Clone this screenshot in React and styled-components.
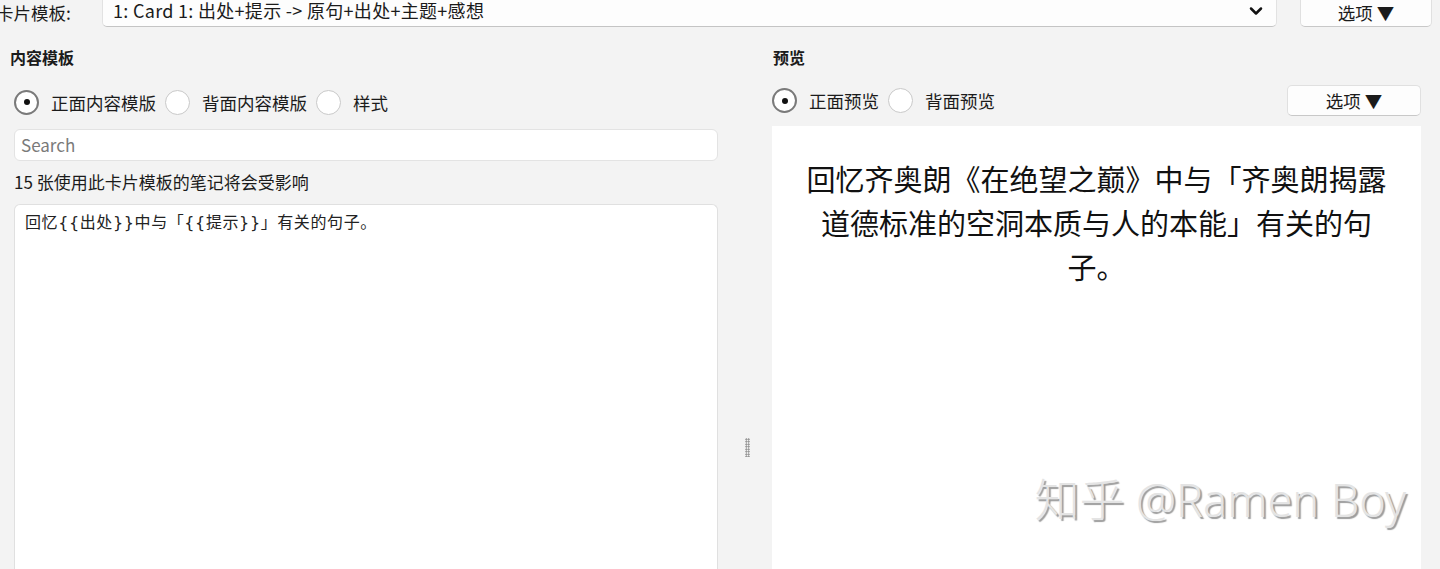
import styled, { createGlobalStyle } from 'styled-components';
import { ChevronDown } from 'lucide-react';

const GlobalStyle = createGlobalStyle`
  html, body {
    margin: 0;
    padding: 0;
    background: #f3f3f3;
  }
  body {
    font-family: "Noto Sans CJK SC", "Noto Sans", "Liberation Sans", sans-serif;
    color: #1b1b1b;
  }
`;

const Page = styled.div`
  width: 1440px;
  height: 569px;
  overflow: hidden;
  background: #f3f3f3;
`;

const TopRow = styled.div`
  display: flex;
  align-items: center;
  height: 34px;
  margin-top: -7px;
  padding-right: 8px;
`;

const TopLabel = styled.div`
  width: 106px;
  margin-left: -4px;
  margin-top: 6px;
  font-size: 17.5px;
  line-height: 22px;
  flex-shrink: 0;
`;

const Select = styled.div`
  flex: 1;
  height: 34px;
  box-sizing: border-box;
  display: flex;
  align-items: flex-end;
  justify-content: space-between;
  padding: 0 10px 5px 10px;
  background: #fdfdfd;
  border: 1px solid #e2e2e2;
  border-bottom-color: #c4c4c4;
  border-radius: 5px;
`;

const SelectText = styled.span`
  font-size: 18px;
  line-height: 22px;
  letter-spacing: 0.3px;
`;

const Button = styled.button`
  width: ${({ w }) => w || 132}px;
  height: ${({ h }) => h || 34}px;
  margin-left: ${({ ml }) => ml || 0}px;
  padding: ${({ pt }) => pt || 0}px 0 0;
  flex-shrink: 0;
  background: #fdfdfd;
  border: 1px solid #e0e0e0;
  border-bottom-color: #c8c8c8;
  border-radius: 5px;
  font-family: inherit;
  font-size: 17.5px;
  line-height: 22px;
  color: #1b1b1b;
`;

const Main = styled.div`
  display: flex;
  height: 542px;
`;

const LeftPanel = styled.div`
  width: 704px;
  margin-left: 14px;
  display: flex;
  flex-direction: column;
`;

const RightPanel = styled.div`
  width: 649px;
  display: flex;
  flex-direction: column;
`;

const SectionTitle = styled.div`
  margin-top: 19px;
  margin-left: ${({ ml }) => ml || 0}px;
  height: 22px;
  line-height: 22px;
  font-size: 16px;
  font-weight: 700;
`;

const RadioRow = styled.div`
  display: flex;
  align-items: center;
  justify-content: space-between;
  margin-top: ${({ mt }) => mt}px;
  height: ${({ h }) => h}px;
`;

const RadioGroup = styled.div`
  display: flex;
  align-items: center;
`;

const RadioItem = styled.label`
  display: flex;
  align-items: center;
  margin-right: 9px;
  font-size: 17.5px;
`;

const Circle = styled.span`
  width: 25px;
  height: 25px;
  box-sizing: border-box;
  border-radius: 50%;
  background: #fff;
  border: ${({ on }) => (on ? '2.5px solid #7a7a7a' : '1px solid #c9c9c9')};
  display: flex;
  align-items: center;
  justify-content: center;
  margin-right: 12px;

  &::after {
    content: '';
    display: ${({ on }) => (on ? 'block' : 'none')};
    width: 6px;
    height: 6px;
    border-radius: 50%;
    background: #111;
  }
`;

const Search = styled.div`
  margin-top: 14px;
  height: 32px;
  box-sizing: border-box;
  background: #fff;
  border: 1px solid #e3e3e3;
  border-radius: 6px;
  padding-left: 6px;
  font-size: 17px;
  line-height: 30px;
  color: #7a7a7a;
`;

const Note = styled.div`
  margin-top: 10px;
  height: 22px;
  line-height: 22px;
  font-size: 17px;
`;

const Editor = styled.div`
  margin-top: 11px;
  flex: 1;
  background: #fff;
  border: 1px solid #e0e0e0;
  border-bottom: 0;
  border-radius: 6px 6px 0 0;
  padding: 8px 10px;
  font-family: "DejaVu Sans", "Noto Sans CJK SC", sans-serif;
  font-size: 16px;
  line-height: 20px;
  letter-spacing: 0.6px;
  color: #222;
`;

const Splitter = styled.div`
  width: 54px;
  display: flex;
  justify-content: center;
  padding-top: 411px;
`;

const Grip = styled.div`
  width: 5px;
  height: 19px;
  margin-left: 4px;
  background-image: radial-gradient(circle, #8a8a8a 0.8px, transparent 1.1px);
  background-size: 2.5px 2.5px;
`;

const Preview = styled.div`
  position: relative;
  margin-top: 10px;
  flex: 1;
  background: #fff;
  padding: 30px 24px 0;
  text-align: center;
  font-size: 29px;
  line-height: 44px;
  color: #111;
`;

const Watermark = styled.div`
  position: absolute;
  right: 15px;
  top: 348px;
  font-family: "Noto Sans", "Noto Sans CJK SC", sans-serif;
  font-weight: 300;
  font-size: 45px;
  line-height: 52px;
  color: #e4e4e4;
  text-shadow: 2px 2px 1px #9c9c9c;
  white-space: nowrap;
`;

const Radio = ({ on, children }) => (
  <RadioItem>
    <Circle on={on} />
    {children}
  </RadioItem>
);

export default function App() {
  return (
    <Page>
      <GlobalStyle />
      <TopRow>
        <TopLabel>卡片模板:</TopLabel>
        <Select>
          <SelectText>1: Card 1: 出处+提示 -&gt; 原句+出处+主题+感想</SelectText>
          <ChevronDown size={20} strokeWidth={3} color="#111" />
        </Select>
        <Button ml={23} pt={6}>选项 ▼</Button>
      </TopRow>
      <Main>
        <LeftPanel>
          <SectionTitle ml={-4}>内容模板</SectionTitle>
          <RadioRow mt={21} h={26}>
            <RadioGroup>
              <Radio on>正面内容模版</Radio>
              <Radio>背面内容模版</Radio>
              <Radio>样式</Radio>
            </RadioGroup>
          </RadioRow>
          <Search>Search</Search>
          <Note>15 张使用此卡片模板的笔记将会受影响</Note>
          <Editor>回忆{'{{'}出处{'}}'}中与「{'{{'}提示{'}}'}」有关的句子。</Editor>
        </LeftPanel>
        <Splitter>
          <Grip />
        </Splitter>
        <RightPanel>
          <SectionTitle ml={1}>预览</SectionTitle>
          <RadioRow mt={17} h={31}>
            <RadioGroup>
              <Radio on>正面预览</Radio>
              <Radio>背面预览</Radio>
            </RadioGroup>
            <Button w={134} h={31}>选项 ▼</Button>
          </RadioRow>
          <Preview>
            回忆齐奥朗《在绝望之巅》中与「齐奥朗揭露道德标准的空洞本质与人的本能」有关的句子。
            <Watermark>知乎 @Ramen Boy</Watermark>
          </Preview>
        </RightPanel>
      </Main>
    </Page>
  );
}
